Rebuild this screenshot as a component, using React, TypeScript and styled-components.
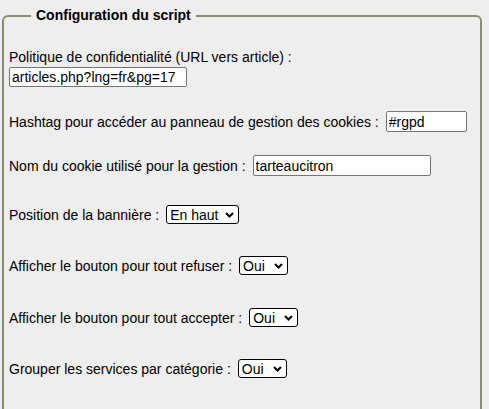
import React, { useState } from "react";
import styled, { createGlobalStyle } from "styled-components";

const GlobalStyle = createGlobalStyle`
  html, body {
    margin: 0;
    padding: 0;
    background: #eeeeee;
  }
  body {
    font-family: "Liberation Sans", Arial, sans-serif;
    font-size: 14px;
    color: #000;
  }
`;

const StyledFieldset = styled.fieldset`
  margin: 8px 7px 0 2px;
  padding: 0 5px 40px 5px;
  border: 2px solid #8c8d70;
  border-radius: 6px;
  min-width: 0;
`;

const StyledLegend = styled.legend`
  margin-left: 22px;
  padding: 0 5px;
  font-weight: bold;
  font-size: 14px;
  line-height: 15px;
`;

const StyledRow = styled.div<{ $top: number; $stacked?: boolean }>`
  display: flex;
  flex-direction: ${p => (p.$stacked ? "column" : "row")};
  align-items: ${p => (p.$stacked ? "flex-start" : "center")};
  gap: ${p => (p.$stacked ? "2px" : "7px")};
  margin-top: ${p => p.$top}px;
  line-height: 16px;
`;

const StyledLabel = styled.label`
  white-space: nowrap;
`;

const StyledTextInput = styled.input<{ $width: number; $height?: number }>`
  box-sizing: border-box;
  width: ${p => p.$width}px;
  height: ${p => p.$height ?? 21}px;
  margin: 0;
  padding: 1px 2px;
  border: 1px solid #767676;
  border-radius: 2px;
  background: #fff;
  font-family: "Liberation Sans", Arial, sans-serif;
  font-size: 14px;
  color: #000;
  outline: none;
`;

const chevron =
  "url(\"data:image/svg+xml;utf8,<svg xmlns='http://www.w3.org/2000/svg' width='9' height='6' viewBox='0 0 9 6'><polyline points='1,1 4.5,4.5 8,1' fill='none' stroke='black' stroke-width='2'/></svg>\")";

const StyledSelect = styled.select<{ $width: number }>`
  appearance: none;
  -webkit-appearance: none;
  box-sizing: border-box;
  width: ${p => p.$width}px;
  height: 19px;
  margin: 0;
  padding: 0 16px 0 3px;
  border: 1px solid #000;
  border-radius: 3px;
  background: #fff ${chevron} no-repeat right 4px center;
  font-family: "Liberation Sans", Arial, sans-serif;
  font-size: 14px;
  color: #000;
  outline: none;
`;

const ouiNon = ["Oui", "Non"];

export default function App() {
  const [privacyUrl, setPrivacyUrl] = useState("articles.php?lng=fr&pg=17");
  const [hashtag, setHashtag] = useState("#rgpd");
  const [cookieName, setCookieName] = useState("tarteaucitron");

  const selectRows = [
    { label: "Position de la bannière :", options: ["En haut", "En bas"], width: 73, top: 29 },
    { label: "Afficher le bouton pour tout refuser :", options: ouiNon, width: 49, top: 32 },
    { label: "Afficher le bouton pour tout accepter :", options: ouiNon, width: 49, top: 33 },
    { label: "Grouper les services par catégorie :", options: ouiNon, width: 49, top: 32 },
  ];

  return (
    <>
      <GlobalStyle />
      <StyledFieldset>
        <StyledLegend>Configuration du script</StyledLegend>

        <StyledRow $top={26} $stacked>
          <StyledLabel>Politique de confidentialité (URL vers article) :</StyledLabel>
          <StyledTextInput
            $width={178}
            $height={20}
            value={privacyUrl}
            onChange={e => setPrivacyUrl(e.target.value)}
          />
        </StyledRow>

        <StyledRow $top={24}>
          <StyledLabel>Hashtag pour accéder au panneau de gestion des cookies :</StyledLabel>
          <StyledTextInput $width={81} value={hashtag} onChange={e => setHashtag(e.target.value)} />
        </StyledRow>

        <StyledRow $top={23}>
          <StyledLabel>Nom du cookie utilisé pour la gestion :</StyledLabel>
          <StyledTextInput $width={178} value={cookieName} onChange={e => setCookieName(e.target.value)} />
        </StyledRow>

        {selectRows.map(row => (
          <StyledRow key={row.label} $top={row.top}>
            <StyledLabel>{row.label}</StyledLabel>
            <StyledSelect $width={row.width} defaultValue={row.options[0]}>
              {row.options.map(o => (
                <option key={o}>{o}</option>
              ))}
            </StyledSelect>
          </StyledRow>
        ))}
      </StyledFieldset>
    </>
  );
}
